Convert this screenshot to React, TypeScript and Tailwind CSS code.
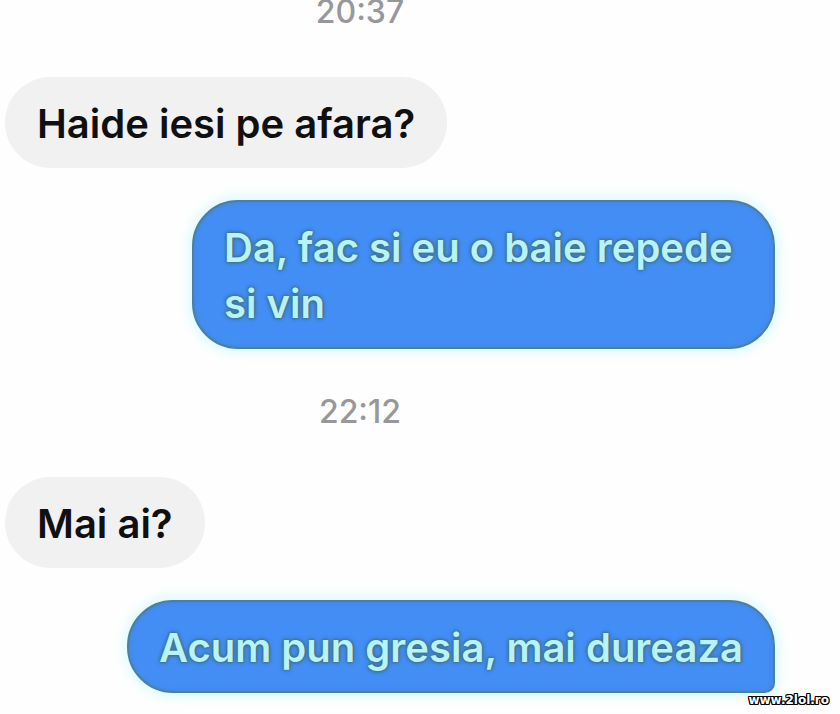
import type { ReactNode } from "react";

type BubbleProps = { children: ReactNode; tail?: boolean };

function Timestamp({ value }: { value: string }) {
  return (
    <time className="block pr-[120px] text-center text-[32px] leading-6 font-medium text-[#98989a]">
      {value}
    </time>
  );
}

function Received({ children }: BubbleProps) {
  return (
    <p className="mt-[53px] ml-[5px] w-fit max-w-[600px] rounded-[46px] bg-[#f1f1f2] px-8 pt-[19px] pb-4 text-[40px] leading-14 font-semibold text-[#101011]">
      {children}
    </p>
  );
}

function Sent({ children, tail = false }: BubbleProps) {
  const shape = tail ? "max-w-[660px] rounded-br-[10px]" : "max-w-[583px]";
  return (
    <p
      className={`mt-8 mr-[65px] ml-auto w-fit rounded-[46px] border-2 border-[#4a7fa8] bg-[#438ef5] px-[30px] pt-[18px] pb-[15px] text-[40px] leading-14 font-semibold text-[#b8f3f7] shadow-[0_0_12px_3px_#d5faff,inset_0_0_5px_#4685c8] text-shadow-[0_0_4px_#3f6f80,0_0_4px_#3f6f80,0_0_2px_#3f6f80] ${shape}`}
    >
      {children}
    </p>
  );
}

export default function App() {
  return (
    <div className="flow-root overflow-hidden bg-[#fefefe] font-['Inter','Liberation_Sans',sans-serif]">
      <main>
        <section>
          <Timestamp value="20:37" />
          <Received>Haide iesi pe afara?</Received>
          <Sent>Da, fac si eu o baie repede si vin</Sent>
        </section>
        <section className="mt-[51px]">
          <Timestamp value="22:12" />
          <Received>Mai ai?</Received>
          <Sent tail>Acum pun gresia, mai dureaza</Sent>
        </section>
      </main>
      <footer className="h-[22px] pr-[11px] text-right font-['DejaVu_Sans',sans-serif] text-xs leading-[14px] font-bold text-white text-shadow-[1px_0_0_#000,-1px_0_0_#000,0_1px_0_#000,0_-1px_0_#000,1px_1px_0_#000,-1px_-1px_0_#000,1px_-1px_0_#000,-1px_1px_0_#000]">
        www.2lol.ro
      </footer>
    </div>
  );
}
